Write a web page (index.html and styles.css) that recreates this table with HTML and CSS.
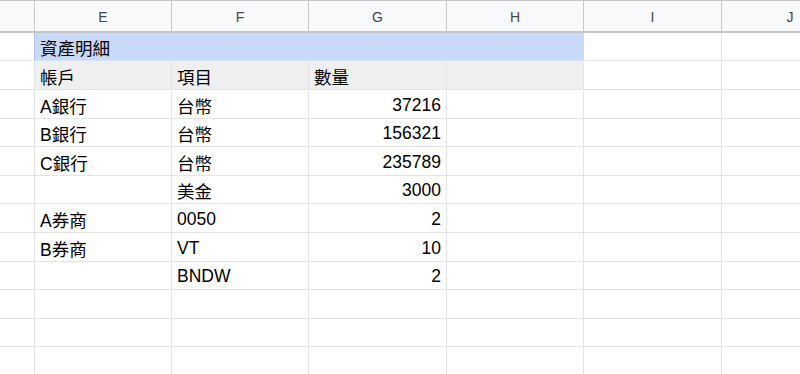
FILE: index.html
```html
<!DOCTYPE html>
<html lang="zh-Hant">
<head>
    <meta charset="UTF-8">
    <meta name="viewport" content="width=device-width, initial-scale=1.0">
    <title>資產明細</title>
    <link rel="stylesheet" href="styles.css">
</head>
<body>
    <div class="viewport">
        <div class="sheet">
            <!-- column letters -->
            <div class="col-head corner"></div>
            <div class="col-head">E</div>
            <div class="col-head">F</div>
            <div class="col-head">G</div>
            <div class="col-head">H</div>
            <div class="col-head">I</div>
            <div class="col-head">J</div>

            <!-- title row -->
            <div class="cell stub"></div>
            <div class="cell title">資產明細</div>
            <div class="cell"></div>
            <div class="cell"></div>

            <!-- field names -->
            <div class="cell stub"></div>
            <div class="cell label">帳戶</div>
            <div class="cell label">項目</div>
            <div class="cell label">數量</div>
            <div class="cell label"></div>
            <div class="cell"></div>
            <div class="cell"></div>

            <div class="cell stub"></div>
            <div class="cell">A銀行</div>
            <div class="cell">台幣</div>
            <div class="cell num">37216</div>
            <div class="cell"></div>
            <div class="cell"></div>
            <div class="cell"></div>

            <div class="cell stub"></div>
            <div class="cell">B銀行</div>
            <div class="cell">台幣</div>
            <div class="cell num">156321</div>
            <div class="cell"></div>
            <div class="cell"></div>
            <div class="cell"></div>

            <div class="cell stub"></div>
            <div class="cell">C銀行</div>
            <div class="cell">台幣</div>
            <div class="cell num">235789</div>
            <div class="cell"></div>
            <div class="cell"></div>
            <div class="cell"></div>

            <div class="cell stub"></div>
            <div class="cell"></div>
            <div class="cell">美金</div>
            <div class="cell num">3000</div>
            <div class="cell"></div>
            <div class="cell"></div>
            <div class="cell"></div>

            <div class="cell stub"></div>
            <div class="cell">A券商</div>
            <div class="cell">0050</div>
            <div class="cell num">2</div>
            <div class="cell"></div>
            <div class="cell"></div>
            <div class="cell"></div>

            <div class="cell stub"></div>
            <div class="cell">B券商</div>
            <div class="cell">VT</div>
            <div class="cell num">10</div>
            <div class="cell"></div>
            <div class="cell"></div>
            <div class="cell"></div>

            <div class="cell stub"></div>
            <div class="cell"></div>
            <div class="cell">BNDW</div>
            <div class="cell num">2</div>
            <div class="cell"></div>
            <div class="cell"></div>
            <div class="cell"></div>

            <div class="cell stub"></div>
            <div class="cell"></div>
            <div class="cell"></div>
            <div class="cell"></div>
            <div class="cell"></div>
            <div class="cell"></div>
            <div class="cell"></div>

            <div class="cell stub"></div>
            <div class="cell"></div>
            <div class="cell"></div>
            <div class="cell"></div>
            <div class="cell"></div>
            <div class="cell"></div>
            <div class="cell"></div>

            <div class="cell stub"></div>
            <div class="cell"></div>
            <div class="cell"></div>
            <div class="cell"></div>
            <div class="cell"></div>
            <div class="cell"></div>
            <div class="cell"></div>
        </div>
    </div>
</body>
</html>
```

FILE: styles.css
```css
:root {
    --grid-line: #e2e3e3;
    --head-line: #c4c7c5;
    --head-bg: #f8f9fa;
    --head-text: #444746;
    --title-bg: #c9daf8;
    --label-bg: #efefef;
}

* {
    margin: 0;
    padding: 0;
    box-sizing: border-box;
}

body {
    background: #ffffff;
    font-family: "Liberation Sans", "Noto Sans CJK TC", Arial, sans-serif;
    color: #000000;
}

/* the visible part of the sheet; column J runs off the right edge */
.viewport {
    width: 100vw;
    height: 100vh;
    overflow: hidden;
}

.sheet {
    display: grid;
    grid-template-columns: 35px 137px 137px 138px 137px 138px 137px;
    grid-template-rows: 33px 28px 29px 29px 28px 29px 28px 29px 29px 28px 29px 28px 29px;
    width: max-content;
}

.col-head {
    display: flex;
    align-items: center;
    justify-content: center;
    background: var(--head-bg);
    border-top: 1px solid var(--head-line);
    border-right: 1px solid var(--head-line);
    border-bottom: 2px solid var(--head-line);
    color: var(--head-text);
    font-size: 14px;
    padding-top: 1px;
}

.cell {
    display: flex;
    align-items: center;
    padding: 2px 5px 0 5px;
    border-right: 1px solid var(--grid-line);
    border-bottom: 1px solid var(--grid-line);
    font-size: 17.5px;
    white-space: nowrap;
    overflow: hidden;
}

.title {
    grid-column: span 4;
    background: var(--title-bg);
    border-left: 1px solid #a9c3f0;
    margin-left: -1px;
    border-right-color: var(--title-bg);
    border-bottom-color: #d6e2f6;
}

.label {
    background: var(--label-bg);
}

.num {
    justify-content: flex-end;
}
```
